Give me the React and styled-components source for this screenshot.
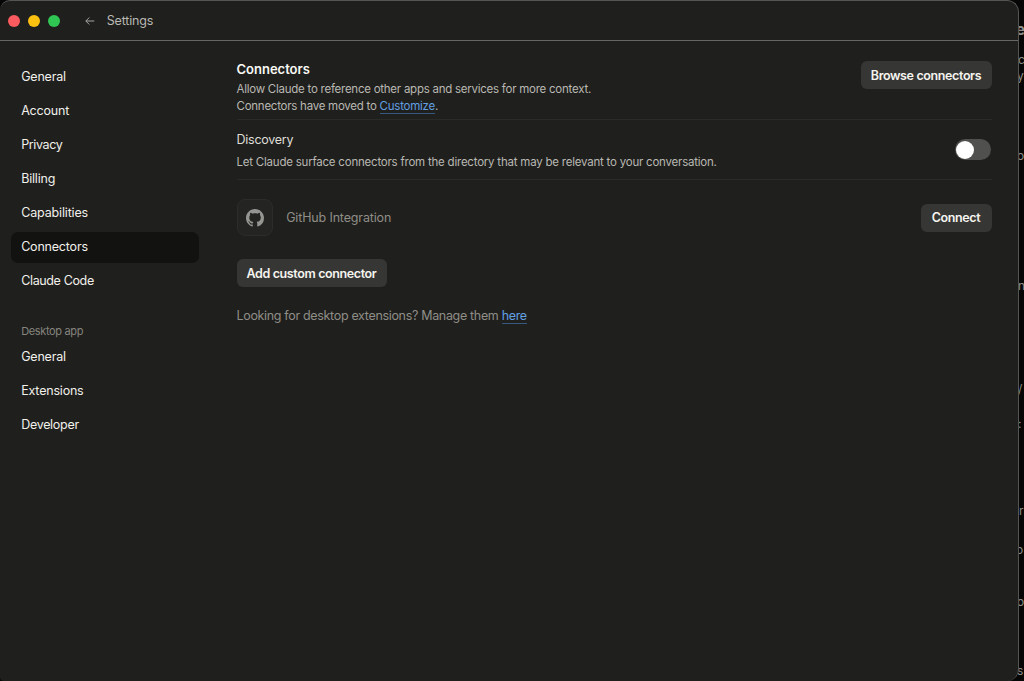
import React from "react";
import styled, { createGlobalStyle } from "styled-components";

const GlobalStyle = createGlobalStyle`
  * {
    box-sizing: border-box;
  }
  body {
    margin: 0;
    overflow: hidden;
    background-color: #060606;
    font-family: Inter, "Liberation Sans", sans-serif;
  }
  button {
    font-family: inherit;
  }
  h1, h2, p {
    margin: 0;
  }
`;

const accountMenu = [
  { title: "General" },
  { title: "Account" },
  { title: "Privacy", spacing: -0.38 },
  { title: "Billing" },
  { title: "Capabilities", spacing: -0.15 },
  { title: "Connectors", active: true },
  { title: "Claude Code", spacing: -0.36 },
];

const desktopMenu = [
  { title: "General" },
  { title: "Extensions" },
  { title: "Developer", spacing: -0.3 },
];

// the bits of the window behind that stick out on the right
const behind = [
  { text: "e", top: 21, size: 15, left: 1016, bold: true },
  { text: "c", top: 51, size: 12, left: 1018 },
  { text: "y", top: 67, size: 12, left: 1017 },
  { text: "o", top: 147, size: 12, left: 1017 },
  { text: "n", top: 277, size: 12, left: 1018 },
  { text: "/", top: 380, size: 12, left: 1018 },
  { text: ":", top: 415, size: 12, left: 1018 },
  { text: "r", top: 502, size: 12, left: 1019 },
  { text: "o", top: 541, size: 12, left: 1016 },
  { text: "o", top: 593, size: 12, left: 1017 },
  { text: "s", top: 662, size: 12, left: 1017 },
];

const Menu = ({ items }) => (
  <MenuList>
    {items.map(({ title, active, spacing = -0.2 }) => (
      <MenuItem key={title} $active={active} $spacing={spacing}>
        {title}
      </MenuItem>
    ))}
  </MenuList>
);

const App = () => {
  return (
    <Desktop>
      <GlobalStyle />
      {behind.map(({ text, top, left, size, bold }) => (
        <BehindText key={top} $top={top} $left={left} $size={size} $bold={bold}>
          {text}
        </BehindText>
      ))}
      <Window>
        <TitleBar>
          <Lights>
            <Light $color="#fb5a5e" />
            <Light $color="#fbc010" />
            <Light $color="#2fc653" />
          </Lights>
          <BackIcon viewBox="0 0 10 10">
            <path d="M9.3 5H0.9M4.3 1.5L0.8 5L4.3 8.5" />
          </BackIcon>
          <WindowTitle>Settings</WindowTitle>
        </TitleBar>
        <Body>
          <Sidebar>
            <Menu items={accountMenu} />
            <MenuLabel>Desktop app</MenuLabel>
            <Menu items={desktopMenu} />
          </Sidebar>
          <Content>
            <Header>
              <div>
                <Title>Connectors</Title>
                <Description $spacing={-0.25}>
                  Allow Claude to reference other apps and services for more
                  context.
                  <br />
                  Connectors have moved to <Link>Customize</Link>.
                </Description>
              </div>
              <Button $width={131}>Browse connectors</Button>
            </Header>
            <Discovery>
              <div>
                <DiscoveryTitle>Discovery</DiscoveryTitle>
                <Description $spacing={-0.22}>
                  Let Claude surface connectors from the directory that may be
                  relevant to your conversation.
                </Description>
              </div>
              <Toggle>
                <ToggleKnob />
              </Toggle>
            </Discovery>
            <Connector>
              <ConnectorIcon>
                <svg width="18" height="18" viewBox="0 0 16 16" fill="#959592">
                  <path d="M8 0C3.58 0 0 3.58 0 8c0 3.54 2.29 6.53 5.47 7.59.4.07.55-.17.55-.38 0-.19-.01-.82-.01-1.49-2.01.37-2.53-.49-2.69-.94-.09-.23-.48-.94-.82-1.13-.28-.15-.68-.52-.01-.53.63-.01 1.08.58 1.23.82.72 1.21 1.87.87 2.33.66.07-.52.28-.87.51-1.07-1.78-.2-3.64-.89-3.64-3.95 0-.87.31-1.59.82-2.15-.08-.2-.36-1.02.08-2.12 0 0 .67-.21 2.2.82.64-.18 1.32-.27 2-.27s1.36.09 2 .27c1.53-1.04 2.2-.82 2.2-.82.44 1.1.16 1.92.08 2.12.51.56.82 1.27.82 2.15 0 3.07-1.87 3.75-3.65 3.95.29.25.54.73.54 1.48 0 1.07-.01 1.93-.01 2.2 0 .21.15.46.55.38A8.01 8.01 0 0 0 16 8c0-4.42-3.58-8-8-8z" />
                </svg>
              </ConnectorIcon>
              <ConnectorName>GitHub Integration</ConnectorName>
              <Button $width={71}>Connect</Button>
            </Connector>
            <Button $width={150}>Add custom connector</Button>
            <Footnote>
              Looking for desktop extensions? Manage them <Link>here</Link>
            </Footnote>
          </Content>
        </Body>
      </Window>
    </Desktop>
  );
};

const Desktop = styled.div`
  position: relative;
  width: 1024px;
  height: 681px;
  overflow: hidden;
  background-color: #060606;
`;
const BehindText = styled.span`
  position: absolute;
  top: ${(props) => props.$top}px;
  left: ${(props) => props.$left}px;
  color: #8d8d8b;
  font-size: ${(props) => props.$size}px;
  font-weight: ${(props) => (props.$bold ? 700 : 400)};
  line-height: 18px;
`;
const Window = styled.div`
  position: relative;
  display: flex;
  flex-direction: column;
  width: 1019px;
  height: 681px;
  border-top: 1px solid #555553;
  border-right: 1px solid #555553;
  border-radius: 10px 12px 12px 4px;
  background-color: #1f1f1d;
`;
const TitleBar = styled.div`
  display: flex;
  align-items: center;
  height: 40px;
  padding-left: 8.4px;
  border-bottom: 1px solid #666663;
`;
const Lights = styled.div`
  display: flex;
  gap: 7.7px;
`;
const Light = styled.span`
  width: 12px;
  height: 12px;
  border-radius: 50%;
  background-color: ${(props) => props.$color};
`;
const BackIcon = styled.svg`
  width: 10px;
  height: 10px;
  margin-left: 25px;
  fill: none;
  stroke: #a5a5a0;
  stroke-width: 1;
`;
const WindowTitle = styled.h1`
  margin-left: 12px;
  color: #b9b8b2;
  font-size: 12.5px;
  font-weight: 400;
  letter-spacing: -0.2px;
  line-height: 19px;
`;
const Body = styled.div`
  display: flex;
  flex: 1;
`;
const Sidebar = styled.nav`
  width: 199px;
  padding: 20.5px 0 0 11px;
`;
const MenuList = styled.ul`
  display: flex;
  flex-direction: column;
  gap: 3.15px;
  margin: 0;
  padding: 0;
  list-style: none;
`;
const MenuItem = styled.li`
  height: 31px;
  padding-left: 10.2px;
  border-radius: 7px;
  color: #f1f0eb;
  background-color: ${(props) => (props.$active ? "#121211" : "transparent")};
  font-size: 12.5px;
  letter-spacing: ${(props) => props.$spacing}px;
  line-height: 30px;
`;
const MenuLabel = styled.p`
  margin: 24.5px 0 2px;
  padding-left: 10.2px;
  color: #85847d;
  font-size: 11px;
  letter-spacing: -0.35px;
  line-height: 18px;
`;
const Content = styled.main`
  width: 755px;
  margin-left: 37.5px;
  padding-top: 20px;
`;
const Header = styled.header`
  display: flex;
  justify-content: space-between;
  height: 59px;
  border-bottom: 1px solid #2a2a28;
`;
const Title = styled.h2`
  margin-bottom: 4px;
  color: #faf9f5;
  font-size: 13px;
  font-weight: 600;
  line-height: 16px;
`;
const Description = styled.p`
  color: #b9b8b2;
  font-size: 11.5px;
  letter-spacing: ${(props) => props.$spacing}px;
  line-height: 17px;
`;
const Link = styled.a`
  border-bottom: 1px solid #36597f;
  color: #62a0e2;
`;
const Button = styled.button`
  width: ${(props) => props.$width}px;
  height: 28px;
  padding: 0;
  border: none;
  border-radius: 6px;
  color: #f5f4ef;
  background-color: #363634;
  font-size: 12.5px;
  font-weight: 600;
  letter-spacing: -0.38px;
  white-space: nowrap;
`;
const Discovery = styled.section`
  display: flex;
  align-items: center;
  justify-content: space-between;
  height: 60px;
  border-bottom: 1px solid #2a2a28;
`;
const DiscoveryTitle = styled.h2`
  margin: 2px 0 5px;
  color: #deddd7;
  font-size: 12.5px;
  font-weight: 400;
  letter-spacing: -0.25px;
  line-height: 18px;
`;
const Toggle = styled.div`
  width: 36px;
  height: 21px;
  margin-right: 0.5px;
  padding: 1.5px 1px;
  border-radius: 11px;
  background-color: #50504e;
`;
const ToggleKnob = styled.div`
  width: 18px;
  height: 18px;
  border-radius: 50%;
  background-color: #fff;
`;
const Connector = styled.section`
  display: flex;
  align-items: center;
  height: 37px;
  margin: 19px 0 23px;
`;
const ConnectorIcon = styled.div`
  display: flex;
  align-items: center;
  justify-content: center;
  width: 36.5px;
  height: 37px;
  border: 1px solid #2c2c2a;
  border-radius: 8px;
  background-color: #242422;
`;
const ConnectorName = styled.span`
  flex: 1;
  margin-left: 13.2px;
  color: #8f8e87;
  font-size: 12.5px;
  letter-spacing: -0.15px;
`;
const Footnote = styled.p`
  margin-top: 20px;
  color: #8f8e87;
  font-size: 12.5px;
  letter-spacing: -0.33px;
  line-height: 18px;
`;

export default App;
